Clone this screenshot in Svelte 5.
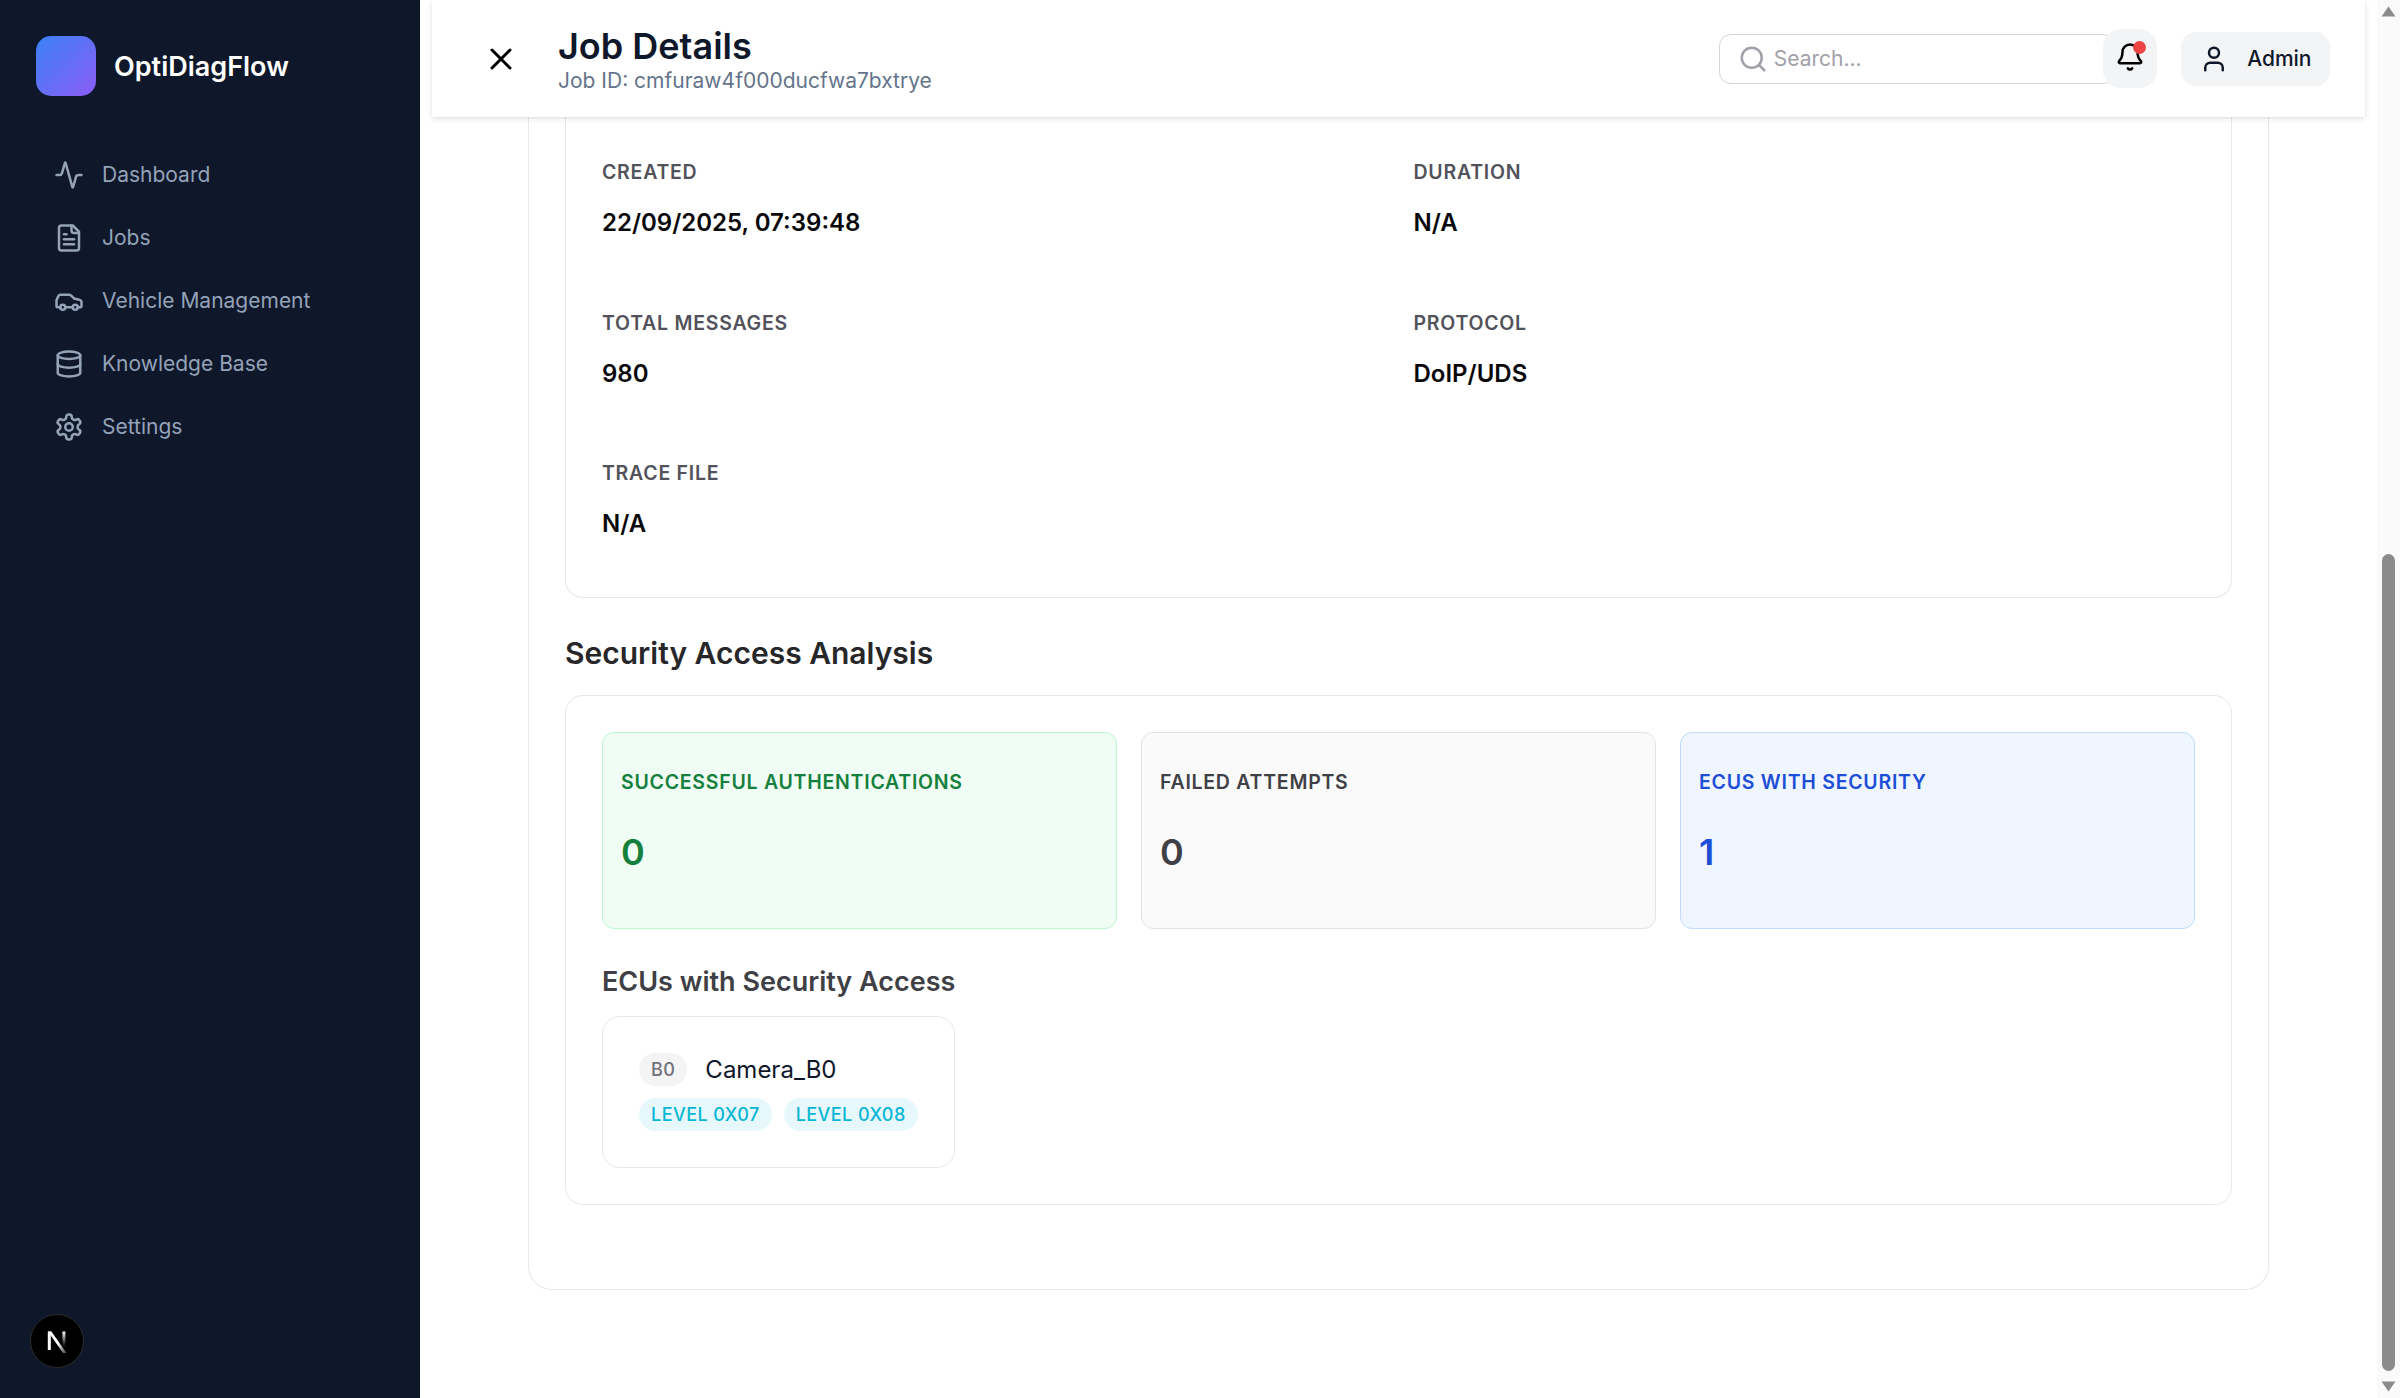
<script>
  const nav = [
    { label: 'Dashboard', icon: 'activity' },
    { label: 'Jobs', icon: 'file' },
    { label: 'Vehicle Management', icon: 'car' },
    { label: 'Knowledge Base', icon: 'db' },
    { label: 'Settings', icon: 'gear' }
  ];
  const fields = [
    ['Created', '22/09/2025, 07:39:48'],
    ['Duration', 'N/A'],
    ['Total Messages', '980'],
    ['Protocol', 'DoIP/UDS'],
    ['Trace File', 'N/A']
  ];
  const stats = [
    { label: 'Successful Authentications', value: '0', tone: 'green' },
    { label: 'Failed Attempts', value: '0', tone: 'grey' },
    { label: 'ECUs with Security', value: '1', tone: 'blue' }
  ];
</script>

<div class="shell">
  <aside class="sidebar">
    <div class="brand">
      <div class="logo"></div>
      <span class="brand-name">OptiDiagFlow</span>
    </div>
    <nav class="nav">
      {#each nav as item}
        <div class="nav-item">
          <svg class="nav-icon" viewBox="0 0 24 24">
            {#if item.icon === 'activity'}
              <path d="M22 12h-2.48a2 2 0 0 0-1.93 1.46l-2.35 8.36a.25.25 0 0 1-.48 0L9.24 2.18a.25.25 0 0 0-.48 0l-2.35 8.36A2 2 0 0 1 4.49 12H2" />
            {:else if item.icon === 'file'}
              <path d="M15 2H6a2 2 0 0 0-2 2v16a2 2 0 0 0 2 2h12a2 2 0 0 0 2-2V7Z" />
              <path d="M14 2v4a2 2 0 0 0 2 2h4" />
              <path d="M10 9H8" /><path d="M16 13H8" /><path d="M16 17H8" />
            {:else if item.icon === 'car'}
              <path d="M19 17h2c.6 0 1-.4 1-1v-3c0-.9-.7-1.7-1.5-1.9C18.7 10.6 16 10 16 10s-1.3-1.4-2.2-2.3c-.5-.4-1.1-.7-1.8-.7H5c-.6 0-1.1.4-1.4.9l-1.4 2.9A3.7 3.7 0 0 0 2 12v4c0 .6.4 1 1 1h2" />
              <circle cx="7" cy="17" r="2" /><path d="M9 17h6" /><circle cx="17" cy="17" r="2" />
            {:else if item.icon === 'db'}
              <ellipse cx="12" cy="5" rx="9" ry="3" />
              <path d="M3 5V19A9 3 0 0 0 21 19V5" />
              <path d="M3 12A9 3 0 0 0 21 12" />
            {:else}
              <path d="M12.22 2h-.44a2 2 0 0 0-2 2v.18a2 2 0 0 1-1 1.73l-.43.25a2 2 0 0 1-2 0l-.15-.08a2 2 0 0 0-2.73.73l-.22.38a2 2 0 0 0 .73 2.73l.15.1a2 2 0 0 1 1 1.72v.51a2 2 0 0 1-1 1.74l-.15.09a2 2 0 0 0-.73 2.73l.22.38a2 2 0 0 0 2.73.73l.15-.08a2 2 0 0 1 2 0l.43.25a2 2 0 0 1 1 1.73V20a2 2 0 0 0 2 2h.44a2 2 0 0 0 2-2v-.18a2 2 0 0 1 1-1.73l.43-.25a2 2 0 0 1 2 0l.15.08a2 2 0 0 0 2.73-.73l.22-.39a2 2 0 0 0-.73-2.73l-.15-.08a2 2 0 0 1-1-1.74v-.5a2 2 0 0 1 1-1.74l.15-.09a2 2 0 0 0 .73-2.73l-.22-.38a2 2 0 0 0-2.73-.73l-.15.08a2 2 0 0 1-2 0l-.43-.25a2 2 0 0 1-1-1.73V4a2 2 0 0 0-2-2z" />
              <circle cx="12" cy="12" r="3" />
            {/if}
          </svg>
          <span>{item.label}</span>
        </div>
      {/each}
    </nav>
    <div class="next-badge">
      <svg viewBox="0 0 24 24" class="next-mark">
        <defs>
          <linearGradient id="nfade" x1="0" y1="0" x2="1" y2="1">
            <stop offset="0.55" stop-color="#fff" />
            <stop offset="1" stop-color="#fff" stop-opacity="0.25" />
          </linearGradient>
          <linearGradient id="nbar" x1="0" y1="0" x2="0" y2="1">
            <stop offset="0" stop-color="#fff" />
            <stop offset="0.85" stop-color="#fff" stop-opacity="0.1" />
          </linearGradient>
        </defs>
        <rect x="2.8" y="2.5" width="3" height="18.5" fill="#fff" />
        <polygon points="3,2.5 6.4,2.5 21.5,24 18,24" fill="url(#nfade)" />
        <rect x="17.4" y="2.5" width="3" height="15" fill="url(#nbar)" />
      </svg>
    </div>
  </aside>

  <main class="main">
    <header class="topbar">
      <div class="top-left">
        <button class="close" aria-label="Close">
          <svg viewBox="0 0 24 24"><path d="M18 6 6 18" /><path d="m6 6 12 12" /></svg>
        </button>
        <div class="titles">
          <h1>Job Details</h1>
          <p>Job ID: cmfuraw4f000ducfwa7bxtrye</p>
        </div>
      </div>
      <div class="top-right">
        <label class="search">
          <svg viewBox="0 0 24 24"><circle cx="11" cy="11" r="8" /><path d="m21 21-4.3-4.3" /></svg>
          <input placeholder="Search..." />
        </label>
        <button class="bell" aria-label="Notifications">
          <svg viewBox="0 0 24 24">
            <path d="M10.268 21a2 2 0 0 0 3.464 0" />
            <path d="M3.262 15.326A1 1 0 0 0 4 17h16a1 1 0 0 0 .74-1.673C19.41 13.956 18 12.499 18 8A6 6 0 0 0 6 8c0 4.499-1.411 5.956-2.738 7.326" />
          </svg>
          <span class="dot"></span>
        </button>
        <button class="user">
          <svg viewBox="0 0 24 24"><path d="M19 21v-2a4 4 0 0 0-4-4H9a4 4 0 0 0-4 4v2" /><circle cx="12" cy="7" r="4" /></svg>
          <span>Admin</span>
        </button>
      </div>
    </header>

    <div class="page">
      <section class="details">
        <div class="fields">
          {#each fields as [label, value]}
            <div class="field">
              <div class="field-label">{label}</div>
              <div class="field-value">{value}</div>
            </div>
          {/each}
        </div>
      </section>

      <h2>Security Access Analysis</h2>
      <section class="panel">
        <div class="stats">
          {#each stats as s}
            <div class="stat {s.tone}">
              <div class="stat-label">{s.label}</div>
              <div class="stat-value">{s.value}</div>
            </div>
          {/each}
        </div>
        <h3>ECUs with Security Access</h3>
        <div class="ecu">
          <div class="ecu-head">
            <span class="addr">B0</span>
            <span class="ecu-name">Camera_B0</span>
          </div>
          <div class="levels">
            <span class="level">Level 0x07</span>
            <span class="level">Level 0x08</span>
          </div>
        </div>
      </section>
    </div>
  </main>

  <div class="scrollbar">
    <svg class="arrow" viewBox="0 0 15 11"><polygon points="7.5,0.5 14.5,10.5 0.5,10.5" /></svg>
    <div class="thumb"></div>
    <svg class="arrow" viewBox="0 0 15 11"><polygon points="0.5,0.5 14.5,0.5 7.5,10.5" /></svg>
  </div>
</div>

<style>
  :global(body) {
    margin: 0;
    background: #fff;
    overflow: hidden;
    font-family: Inter, "Liberation Sans", sans-serif;
  }
  h1, h2, h3, p { margin: 0; }
  button { font-family: inherit; border: 0; padding: 0; cursor: pointer; }
  svg { fill: none; stroke: currentColor; stroke-width: 2; stroke-linecap: round; stroke-linejoin: round; display: block; flex: none; }

  .shell {
    display: grid;
    grid-template-columns: 420px 1fr 23px;
    height: 1398px;
    overflow: hidden;
  }

  .sidebar {
    background: #0f172a;
    display: flex;
    flex-direction: column;
    padding: 36px 0 30px;
    box-sizing: border-box;
  }
  .brand { display: flex; align-items: center; gap: 18px; padding-left: 36px; }
  .logo { width: 60px; height: 60px; border-radius: 15px; background: linear-gradient(135deg, #3b82f6, #8b5cf6); }
  .brand-name { color: #fff; font-size: 27px; font-weight: 600; line-height: 36px; padding-top: 1px; }
  .nav { margin-top: 47px; display: flex; flex-direction: column; }
  .nav-item { height: 63px; display: flex; align-items: center; gap: 18px; padding-left: 54px; color: #94a3b8; font-size: 21px; }
  .nav-icon { width: 30px; height: 30px; }
  .next-badge {
    margin: auto 0 0 30px;
    width: 54px; height: 54px;
    border-radius: 50%;
    background: #000;
    border: 1.5px solid #2b2b2b;
    box-sizing: border-box;
    display: flex; align-items: center; justify-content: center;
  }
  .next-mark { width: 24px; height: 24px; stroke: none; }

  .main { min-width: 0; display: flex; flex-direction: column; }
  .topbar {
    margin: 0 12px;
    height: 117px;
    flex: none;
    box-sizing: border-box;
    background: #fff;
    box-shadow: 0 2px 6px rgba(15, 23, 42, 0.1), 0 1px 2px rgba(15, 23, 42, 0.05);
    display: flex;
    align-items: center;
    justify-content: space-between;
    padding: 0 35.5px 0 51px;
    position: relative;
    z-index: 2;
  }
  .top-left { display: flex; align-items: center; gap: 39px; }
  .close { background: none; color: #000; width: 36px; height: 36px; }
  .close svg { width: 36px; height: 36px; }
  h1 { font-size: 36px; line-height: 45px; font-weight: 600; color: #0f172a; }
  .titles { margin-top: -1px; }
  .titles p { font-size: 21px; line-height: 24px; color: #64748b; }

  .top-right { display: flex; align-items: center; }
  .search {
    width: 396px; height: 50px;
    box-sizing: border-box;
    border: 1px solid #d4d4d8;
    border-radius: 12px;
    display: flex; align-items: center;
    gap: 6px;
    padding-left: 17.5px;
    color: #a1a1aa;
    margin-right: -12px;
    background: #fff;
  }
  .search svg { width: 30px; height: 30px; }
  .search input {
    border: 0; outline: 0; background: none; flex: 1; min-width: 0;
    font: inherit; font-size: 21px; color: #0f172a; padding: 0;
  }
  .search input::placeholder { color: #a1a1aa; opacity: 1; }
  .bell {
    position: relative; z-index: 1;
    width: 54px; height: 59px;
    border-radius: 18px;
    background: #f3f4f6;
    color: #000;
    display: flex; align-items: center; justify-content: center;
    margin-right: 24px;
    padding-bottom: 4px;
    box-sizing: border-box;
  }
  .bell svg { width: 30px; height: 30px; }
  .dot { position: absolute; width: 13px; height: 13px; border-radius: 50%; background: #ef4444; top: 11.5px; left: 29.5px; }
  .user {
    height: 54px;
    border-radius: 15px;
    background: #f3f4f6;
    color: #0f172a;
    display: flex; align-items: center; gap: 18px;
    padding: 0 18px;
    font-size: 21px;
    font-weight: 500;
  }
  .user svg { width: 30px; height: 30px; }

  .page {
    margin: 0 108px;
    box-sizing: border-box;
    border: 1px solid #e5e7eb;
    border-top: 0;
    border-radius: 0 0 24px 24px;
    padding: 0 36px 84px;
  }
  .details {
    border: 1px solid #e5e7eb;
    border-top: 0;
    border-radius: 0 0 18px 18px;
    padding: 40px 36px 55px;
  }
  .fields { display: grid; grid-template-columns: 1fr 1fr; column-gap: 30px; row-gap: 66.5px; }
  .field-label {
    font-size: 19.5px; line-height: 30px; font-weight: 600;
    letter-spacing: 0.75px; text-transform: uppercase; color: #52525b;
    margin-bottom: 18px;
  }
  .field-value { font-size: 24px; line-height: 36px; font-weight: 600; color: #09090b; }

  h2 { font-size: 30px; line-height: 45px; font-weight: 600; color: #27272a; margin: 33px 0 19px; }
  .panel { border: 1px solid #e5e7eb; border-radius: 18px; padding: 36px; }
  .stats { display: grid; grid-template-columns: repeat(3, 1fr); gap: 24px; }
  .stat { border: 1px solid; border-radius: 12px; padding: 34px 18px 48px; height: 197px; box-sizing: border-box; }
  .stat-label { font-size: 19.5px; line-height: 30px; font-weight: 600; letter-spacing: 0.75px; text-transform: uppercase; }
  .stat-value { font-size: 36px; line-height: 54px; font-weight: 600; margin-top: 28px; }
  .green { background: #f0fdf4; border-color: #bbf7d0; color: #15803d; }
  .grey { background: #fafafa; border-color: #e4e4e7; color: #3f3f46; }
  .blue { background: #eff6ff; border-color: #bfdbfe; color: #1d4ed8; }

  h3 { font-size: 27px; line-height: 40px; font-weight: 600; color: #3f3f46; margin: 33px 0 14px; }
  .ecu {
    width: fit-content;
    border: 1px solid #e5e7eb;
    border-radius: 18px;
    padding: 36px;
    display: flex; flex-direction: column; gap: 12px;
  }
  .ecu-head { display: flex; align-items: center; gap: 18px; height: 33px; }
  .addr {
    height: 33px; line-height: 33px; padding: 0 12px;
    border-radius: 999px; background: #f4f4f5; color: #71717a;
    font-size: 18px; font-weight: 500; letter-spacing: 0.45px;
  }
  .ecu-name { font-size: 24px; color: #0f172a; }
  .levels { display: flex; gap: 12px; }
  .level {
    height: 33px; line-height: 33px; padding: 0 12px;
    border-radius: 999px; background: #e6f8fc; color: #06b6d4;
    font-size: 18px; font-weight: 500; letter-spacing: 0.45px; text-transform: uppercase; white-space: nowrap;
  }

  .scrollbar {
    background: #fafafa;
    display: flex; flex-direction: column; align-items: center;
    padding: 6px 0;
    box-sizing: border-box;
    color: #8b8b8b;
  }
  .arrow { width: 15px; height: 11px; fill: #8b8b8b; stroke: none; }
  .thumb { width: 13px; height: 817px; margin-top: auto; margin-bottom: 10px; border-radius: 7px; background: #8b8b8b; }
</style>
